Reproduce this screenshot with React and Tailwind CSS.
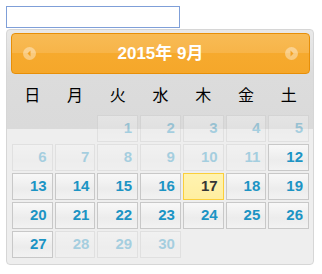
import React from 'react';

const dayNames = ['日', '月', '火', '水', '木', '金', '土'];

// September 2015 starts on Tuesday
const cells = [
  null, null, 1, 2, 3, 4, 5,
  6, 7, 8, 9, 10, 11, 12,
  13, 14, 15, 16, 17, 18, 19,
  20, 21, 22, 23, 24, 25, 26,
  27, 28, 29, 30, null, null, null,
];

const isDisabled = (d) => d < 12 || d > 27;

function NavIcon({ dir }) {
  return (
    <svg width="13" height="13" viewBox="0 0 13 13">
      <circle cx="6.5" cy="6.5" r="6.5" fill="#ffffff" fillOpacity="0.38" />
      {dir === 'prev' ? (
        <path d="M4.5 6.5 L7.5 3.5 L7.5 9.5 Z" fill="#f3a224" />
      ) : (
        <path d="M8.5 6.5 L5.5 3.5 L5.5 9.5 Z" fill="#f3a224" />
      )}
    </svg>
  );
}

function DayCell({ day }) {
  if (day === null) return <div />;
  const today = day === 17;
  const disabled = isDisabled(day);
  return (
    <div
      className={`h-[27px] flex items-center justify-end pr-[5px] border text-[15px] font-bold ${
        today
          ? 'border-[#fbcf3a] bg-[linear-gradient(to_bottom,#fff3b0,#ffeea0)] text-[#363636]'
          : 'border-[#c8c8c8] bg-[linear-gradient(to_bottom,#f8f8f8,#ececec_60%,#f2f2f2)] text-[#1c94c4]'
      } ${disabled ? 'opacity-35' : ''}`}
    >
      {day}
    </div>
  );
}

export default function App() {
  return (
    <div
      className="w-[322px] h-[274px] bg-white pt-[6px] pl-[6px]"
      style={{ fontFamily: '"Liberation Sans", "Noto Sans CJK JP", sans-serif' }}
    >
      {/* Input */}
      <input
        type="text"
        className="block w-[174px] h-[22px] border border-[#7f9fd8] bg-white outline-none"
      />

      {/* Datepicker */}
      <div className="mt-[1px] w-[308px] h-[236px] border border-[#d6d6d6] rounded-[4px] pl-[4px] pr-[3px] pt-[3px] pb-[6px] bg-[linear-gradient(to_bottom,#e9e9e9,#dcdcdc_45px,#dadada_99px,#eeeeee_99px)]">
        {/* Header */}
        <div className="h-[41px] border border-[#e78f08] rounded-[4px] flex items-center justify-between px-[11px] bg-[linear-gradient(to_bottom,#f8bb55,#f7b448_50%,#f6aa2e_50%,#f5a72a)]">
          <NavIcon dir="prev" />
          <span className="text-white font-bold text-[17px]">2015年 9月</span>
          <NavIcon dir="next" />
        </div>

        {/* Day names */}
        <div className="h-[41px] px-[1px] grid grid-cols-7 gap-x-[2px] items-center pb-[2px]">
          {dayNames.map((n) => (
            <div key={n} className="text-center text-[16px] text-black font-normal" style={{ fontFamily: '"Noto Sans CJK JP", sans-serif' }}>
              {n}
            </div>
          ))}
        </div>

        {/* Days */}
        <div className="px-[1px] grid grid-cols-7 gap-[2px]">
          {cells.map((d, i) => (
            <DayCell key={i} day={d} />
          ))}
        </div>
      </div>
    </div>
  );
}
